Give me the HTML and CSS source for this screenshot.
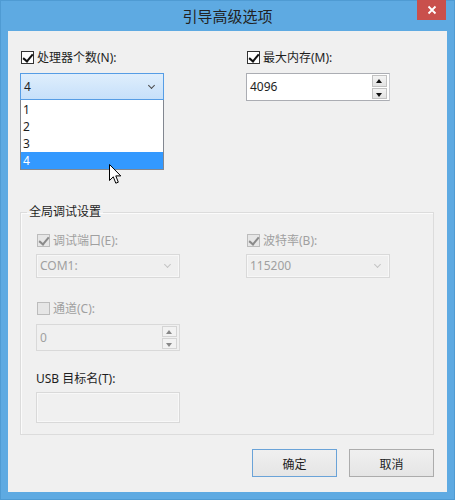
FILE: index.html
```html
<!DOCTYPE html>
<html lang="zh-CN">

<head>
    <meta charset="UTF-8" />
    <title>引导高级选项</title>
    <link rel="stylesheet" href="styles.css">
</head>

<body>
    <div class="window">
        <div class="titlebar">
            <span class="title">引导高级选项</span>
            <span class="close">
                <svg width="10" height="10" viewBox="0 0 10 10">
                    <path d="M1.5 1.5 L8.5 8.5 M8.5 1.5 L1.5 8.5" stroke="#fff" stroke-width="1.8" />
                </svg>
            </span>
        </div>

        <div class="client">
            <div class="top">
                <div class="field">
                    <label class="check"><span class="box checked"></span>处理器个数(N):</label>
                    <div class="combo open">
                        <div class="combo-head">4</div>
                        <ul class="combo-list">
                            <li>1</li>
                            <li>2</li>
                            <li>3</li>
                            <li class="selected">4</li>
                        </ul>
                    </div>
                </div>
                <div class="field">
                    <label class="check"><span class="box checked"></span>最大内存(M):</label>
                    <div class="spin">
                        <span class="value">4096</span>
                        <span class="spin-btns"><span class="up"></span><span class="down"></span></span>
                    </div>
                </div>
            </div>

            <fieldset class="group">
                <legend>全局调试设置</legend>
                <div class="group-body">
                    <div class="pair">
                        <div class="field tight">
                            <label class="check disabled"><span class="box checked"></span>调试端口(E):</label>
                            <div class="combo disabled">
                                <div class="combo-head">COM1:</div>
                            </div>
                        </div>
                        <div class="field tight">
                            <label class="check disabled"><span class="box checked"></span>波特率(B):</label>
                            <div class="combo disabled">
                                <div class="combo-head">115200</div>
                            </div>
                        </div>
                    </div>

                    <div class="field channel">
                        <label class="check disabled"><span class="box"></span>通道(C):</label>
                        <div class="spin disabled">
                            <span class="value">0</span>
                            <span class="spin-btns"><span class="up"></span><span class="down"></span></span>
                        </div>
                    </div>

                    <div class="field usb">
                        <label class="plain">USB 目标名(T):</label>
                        <div class="textbox disabled"></div>
                    </div>
                </div>
            </fieldset>

            <div class="buttons">
                <button class="btn default">确定</button>
                <button class="btn">取消</button>
            </div>

            <svg class="cursor" width="13" height="21" viewBox="0 0 13 21">
                <path d="M0.5 0.5 L0.5 16.5 L4.3 12.8 L6.8 19.2 L9.3 18.2 L6.8 11.9 L11.8 11.9 Z"
                    fill="#fff" stroke="#000" stroke-width="1" stroke-linejoin="round" />
            </svg>
        </div>
    </div>
</body>

</html>
```

FILE: styles.css
```css
* {
    margin: 0;
    padding: 0;
    box-sizing: border-box;
}

body {
    font-family: 'Noto Sans', 'Noto Sans CJK SC', sans-serif;
    font-size: 12px;
    color: #1e1e1e;
    background: #5eaae2;
}

.window {
    width: 455px;
    height: 500px;
    background: #5eaae2;
    border: 1px solid #4f9bd3;
    display: flex;
    flex-direction: column;
}

/* title bar */

.titlebar {
    height: 30px;
    display: grid;
    grid-template-columns: 1fr auto 1fr;
}

.title {
    grid-column: 2;
    font-family: 'Noto Sans CJK SC', sans-serif;
    font-size: 15px;
    line-height: 30px;
    color: #222;
}

.close {
    grid-column: 3;
    justify-self: end;
    width: 29px;
    height: 20px;
    margin-right: 8px;
    margin-top: -1px;
    background: #c9504c;
    display: flex;
    align-items: center;
    justify-content: center;
}

/* client area */

.client {
    position: relative;
    flex: 1;
    margin: 0 7px 7px;
    background: #f0f0f0;
}

.top {
    display: grid;
    grid-template-columns: 144px 144px;
    column-gap: 82px;
    margin: 19px 0 0 12px;
}

.field {
    display: flex;
    flex-direction: column;
    gap: 8px;
}

.field.tight {
    gap: 6px;
}

.check,
.plain {
    height: 15px;
    line-height: 15px;
    display: flex;
    align-items: center;
    gap: 3px;
    white-space: nowrap;
}

.box {
    position: relative;
    width: 13px;
    height: 13px;
    margin-left: 1px;
    background: #fff;
    border: 1px solid #333;
}

.box.checked::after {
    content: "";
    position: absolute;
    left: 3px;
    top: 0;
    width: 4px;
    height: 8px;
    border: solid #111;
    border-width: 0 2px 2px 0;
    transform: rotate(40deg);
}

.check.disabled {
    color: #a0a0a0;
}

.check.disabled .box {
    background: #e6e6e6;
    border-color: #bcbcbc;
}

.check.disabled .box.checked::after {
    border-color: #8a8a8a;
}

/* combo box */

.combo {
    position: relative;
}

.combo-head {
    position: relative;
    height: 27px;
    line-height: 25px;
    padding-left: 3px;
    border: 1px solid #569de5;
    background: linear-gradient(#dfeefc, #c6e0fa);
}

.combo-head::after {
    content: "";
    position: absolute;
    right: 9px;
    top: 9px;
    width: 4px;
    height: 4px;
    border: solid #4a4a4a;
    border-width: 0 1.5px 1.5px 0;
    transform: rotate(45deg);
}

.combo-list {
    position: absolute;
    top: 100%;
    left: 0;
    width: 100%;
    list-style: none;
    background: #fff;
    border: 1px solid #828790;
    border-top: none;
    padding-top: 1px;
    z-index: 2;
}

.combo-list li {
    height: 17px;
    line-height: 17px;
    padding-left: 2px;
}

.combo-list li.selected {
    background: #3399ff;
    color: #fff;
}

.combo.disabled .combo-head {
    height: 24px;
    line-height: 22px;
    color: #a0a0a0;
    border-color: #d9d9d9;
    background: #efefef;
    box-shadow: inset 0 0 0 1px #f7f7f7;
}

.combo.disabled .combo-head::after {
    top: 7px;
    border-color: #c4c4c4;
}

/* spin box */

.spin {
    height: 28px;
    display: flex;
    align-items: center;
    justify-content: space-between;
    padding: 1px 2px 1px 3px;
    background: #fff;
    border: 1px solid #abadb3;
    border-right-color: #c9cbd0;
}

.value {
    line-height: 24px;
}

.spin-btns {
    width: 15px;
    height: 100%;
    display: flex;
    flex-direction: column;
    gap: 1px;
}

.spin-btns span {
    flex: 1;
    position: relative;
    border: 1px solid #c2c2c2;
    background: linear-gradient(#f4f4f4, #e3e3e3);
}

.spin-btns span::after {
    content: "";
    position: absolute;
    left: 3px;
    top: 3px;
    border-left: 3.5px solid transparent;
    border-right: 3.5px solid transparent;
}

.spin-btns .up::after {
    border-bottom: 4px solid #111;
}

.spin-btns .down::after {
    top: 4px;
    border-top: 4px solid #111;
}

.spin.disabled {
    height: 27px;
    color: #a0a0a0;
    background: #f0f0f0;
    border-color: #d9d9d9;
}

.spin.disabled .spin-btns span {
    border-color: #d4d4d4;
    background: #f2f2f2;
}

.spin.disabled .up::after {
    border-bottom-color: #888;
}

.spin.disabled .down::after {
    border-top-color: #888;
}

.textbox {
    height: 31px;
    border: 1px solid #d9d9d9;
    background: #f0f0f0;
    box-shadow: inset 0 0 0 1px #f8f8f8;
}

/* group box */

.group {
    margin: 103px 13px 0 12px;
    border: 1px solid #dcdcdc;
    box-shadow: inset 1px 1px 0 #fbfbfb;
}

.group legend {
    margin-left: 6px;
    padding: 0 2px;
    line-height: 16px;
    color: #1e1e1e;
}

.group-body {
    padding: 13px 15px 11px;
}

.pair {
    display: grid;
    grid-template-columns: 144px 144px;
    column-gap: 66px;
}

.channel {
    width: 144px;
    margin-top: 23px;
}

.usb {
    width: 144px;
    margin-top: 20px;
    gap: 6px;
}

/* buttons */

.buttons {
    display: flex;
    justify-content: flex-end;
    gap: 12px;
    margin: 14px 13px 0 0;
}

.btn {
    width: 85px;
    height: 28px;
    font-family: 'Noto Sans CJK SC', sans-serif;
    font-size: 12px;
    color: #1e1e1e;
    border: 1px solid #acacac;
    background: linear-gradient(#f0f0f0, #e5e5e5);
}

.btn.default {
    border-color: #6aa3d8;
}

.cursor {
    position: absolute;
    left: 101px;
    top: 133px;
    z-index: 3;
}
```
